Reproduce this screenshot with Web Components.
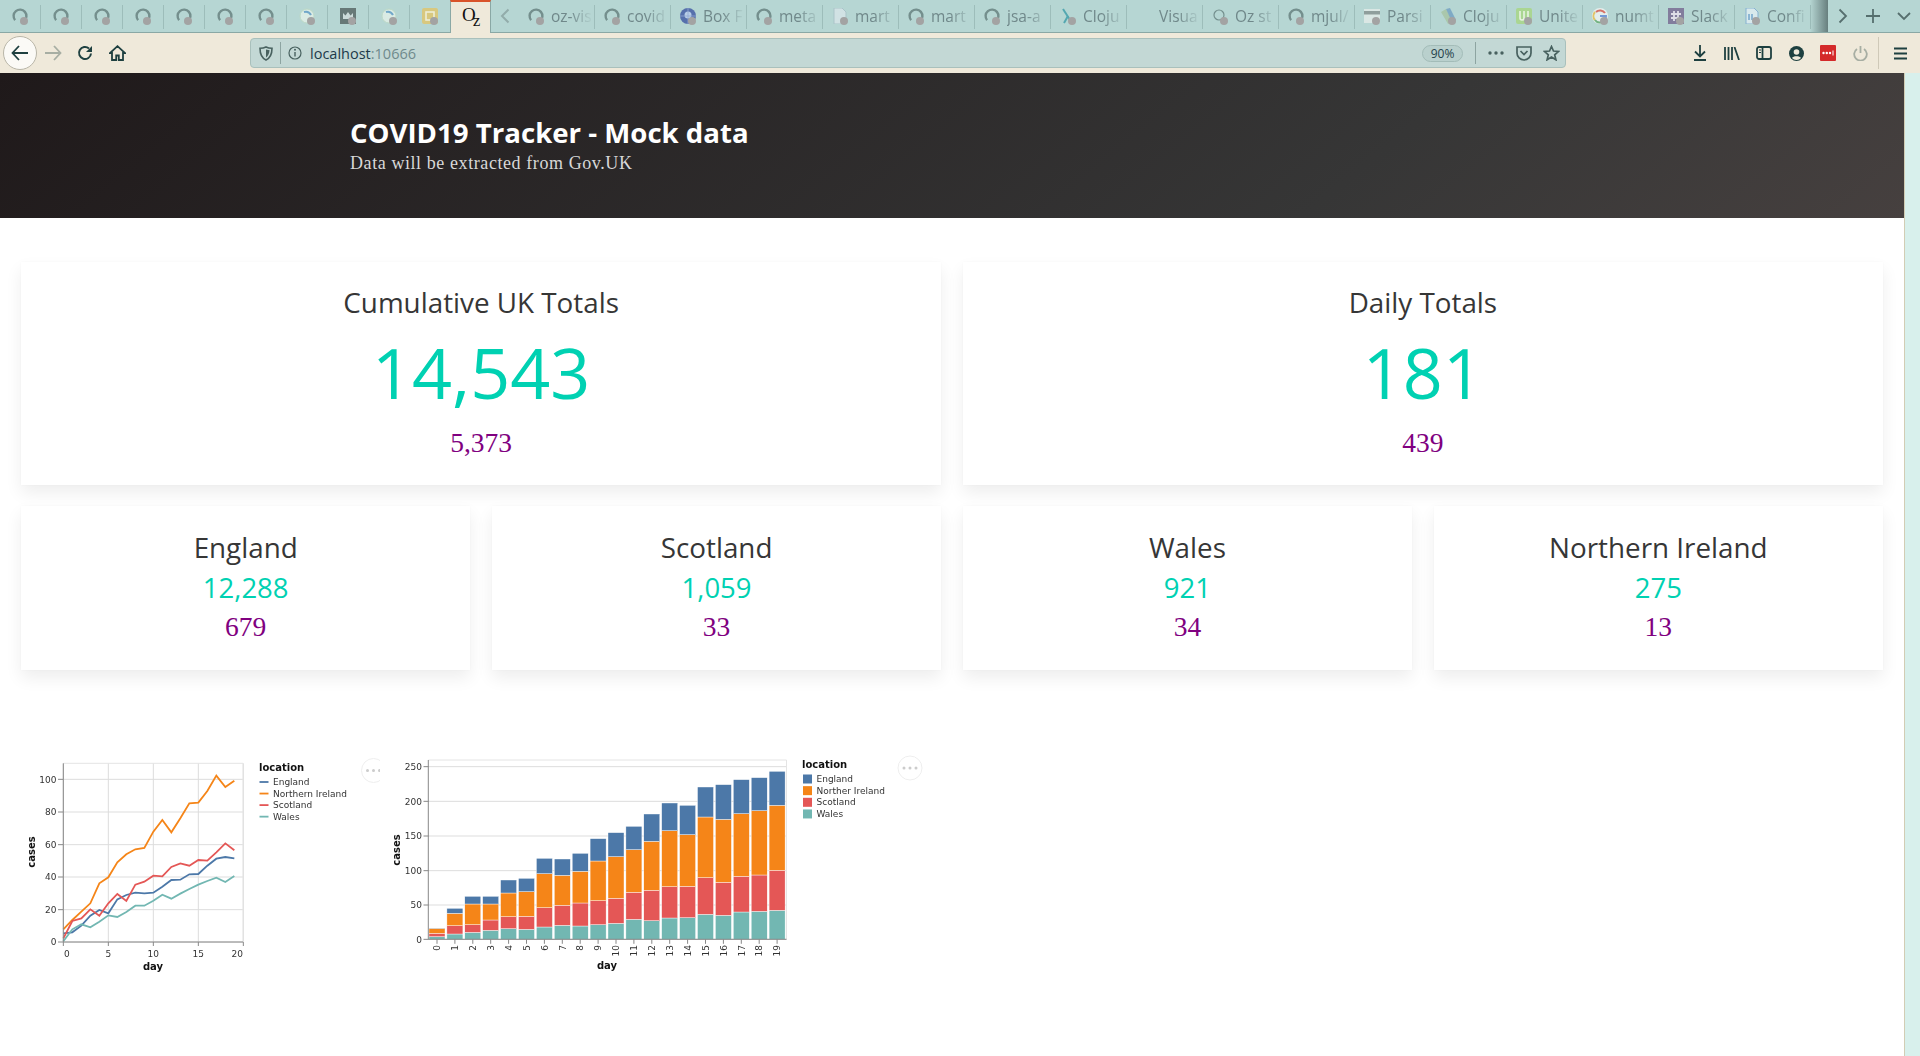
<!DOCTYPE html>
<html>
<head>
<meta charset="utf-8">
<title>COVID19 Tracker</title>
<style>
  html, body { margin: 0; height: 1056px; overflow: hidden; background: #fff; }
  body { display: flex; flex-direction: column; font-family: "Open Sans", sans-serif; }
  .below { display: flex; flex: 1; min-height: 0; }
  .page { width: 1904px; flex: none; }
</style>
</head>
<body>
<browser-tabs></browser-tabs>
<browser-toolbar></browser-toolbar>
<div class="below">
  <div class="page">
    <page-hero>
      <span slot="title">COVID19 Tracker - Mock data</span>
      <span slot="subtitle">Data will be extracted from Gov.UK</span>
    </page-hero>
    <stat-grid columns="2" style="margin-top:44px">
      <stat-card size="lg"><span slot="title">Cumulative UK Totals</span><span slot="value">14,543</span><span slot="sub">5,373</span></stat-card>
      <stat-card size="lg"><span slot="title">Daily Totals</span><span slot="value">181</span><span slot="sub">439</span></stat-card>
    </stat-grid>
    <stat-grid columns="4" style="margin-top:21px">
      <stat-card><span slot="title">England</span><span slot="value">12,288</span><span slot="sub">679</span></stat-card>
      <stat-card><span slot="title">Scotland</span><span slot="value">1,059</span><span slot="sub">33</span></stat-card>
      <stat-card><span slot="title">Wales</span><span slot="value">921</span><span slot="sub">34</span></stat-card>
      <stat-card><span slot="title">Northern Ireland</span><span slot="value">275</span><span slot="sub">13</span></stat-card>
    </stat-grid>
    <chart-row>
      <line-chart></line-chart>
      <bar-chart></bar-chart>
    </chart-row>
  </div>
  <page-scrollbar></page-scrollbar>
</div>

<script>
// favicons, all drawn on a 16x16 box
const FAVICONS = {
  github: '<circle cx="8" cy="8" r="6.4" fill="none" stroke="#6d8886" stroke-width="2.4" stroke-dasharray="33 7" transform="rotate(140 8 8)"/>',
  clj: '<circle cx="8" cy="8" r="7" fill="#dfeee6" stroke="#bcd8c4"/><path d="M5 4a6 6 0 0 1 7 3" fill="none" stroke="#6aa3c9" stroke-width="2"/>',
  crown: '<rect x="0" y="0" width="16" height="16" fill="#5f6f6e"/><path d="M3 11V5l2.500 2.500L8 4l2.500 3.500L13 5v6z" fill="#cfdcda"/>',
  yellow: '<rect x="0" y="0" width="16" height="16" rx="2" fill="#dcc777"/><rect x="4" y="4" width="8" height="8" fill="none" stroke="#f4f0d8" stroke-width="1.600"/>',
  box: '<circle cx="8" cy="8" r="8" fill="#4c65a8"/><circle cx="8" cy="7" r="3.500" fill="#b8cdea"/><path d="M8 0v16M0 8h16" stroke="#8fa5d4" stroke-width=".8"/>',
  doc: '<path d="M2 0h8l4 4v12H2z" fill="#d4e4e6" stroke="#a9c2c8"/>',
  clojure: '<path d="M3 1l9 14" stroke="#4aa3ad" stroke-width="2"/><path d="M8 8l-4 7" stroke="#4aa3ad" stroke-width="2"/>',
  oz: '<circle cx="7" cy="7" r="5" fill="none" stroke="#6d8886" stroke-width="1.200"/>',
  parse: '<rect x="0" y="1" width="16" height="14" fill="#dfe9e6"/><rect x="0" y="3" width="16" height="3.500" fill="#8b9997"/>',
  books: '<path d="M1 4l5-3 7 12-5 3z" fill="#a9c6a8"/><path d="M6 1l4-1 6 12-4 2z" fill="#7aa6c4"/>',
  unite: '<rect x="0" y="0" width="16" height="16" rx="2" fill="#a9d68c"/><path d="M4 3v7a2 2 0 0 0 4 0V3M8 3v7a2 2 0 0 0 4 0V3" fill="none" stroke="#eef7e4" stroke-width="1.600"/>',
  google: '<circle cx="8" cy="8" r="8" fill="#e9f1ef"/><path d="M13 5a6 6 0 0 0-9-1" fill="none" stroke="#d9685c" stroke-width="2"/><path d="M3 4a6 6 0 0 0 0 8" fill="none" stroke="#e6c35c" stroke-width="2"/><path d="M3 12a6 6 0 0 0 9 1" fill="none" stroke="#6cb07a" stroke-width="2"/><path d="M8 8h6a6 6 0 0 1-2 5" fill="none" stroke="#6d94d8" stroke-width="2"/>',
  slack: '<rect x="0" y="0" width="16" height="16" fill="#7d7498"/><path d="M6 3v10M10 3v10M3 6h10M3 10h10" stroke="#e4e0ea" stroke-width="1.800"/>',
  conf: '<path d="M2 0h8l4 4v12H2z" fill="#dcecef" stroke="#82aed0"/><path d="M5 6v6M8 6v6" stroke="#5b94c4" stroke-width="1.300"/>',
  none: ''
};

class BrowserTab extends HTMLElement {
  connectedCallback() {
    const icon = this.getAttribute('icon') || 'none';
    this.attachShadow({ mode: 'open' });
    this.shadowRoot.innerHTML = `
      <style>
        :host { display: flex; flex: none; align-items: center; box-sizing: border-box; height: 32px; position: relative; }
        :host([pinned]) { width: 41px; padding-left: 12px; }
        :host(:not([pinned])) { width: 76px; padding-left: 9px; }
        :host::after { content: ""; position: absolute; right: 0; top: 5px; bottom: 3px; width: 1px; background: #9dbdba; }
        .fav { position: relative; width: 16px; height: 16px; flex: none; }
        .fav svg { display: block; opacity: .9; }
        .dot { position: absolute; right: 0; bottom: -1px; width: 8px; height: 8px; border-radius: 50%; background: #a3a3a3; }
        .name { margin-left: 7px; width: 42px; white-space: nowrap; overflow: hidden; font-size: 15.500px; color: #70888a;
          -webkit-mask-image: linear-gradient(to right, #000 45%, transparent 100%); mask-image: linear-gradient(to right, #000 45%, transparent 100%); }
      </style>
      <div class="fav"><svg width="16" height="16" viewBox="0 0 16 16">${FAVICONS[icon]}</svg>${icon === 'none' ? '' : '<i class="dot"></i>'}</div>
      ${this.hasAttribute('pinned') ? '' : '<div class="name"><slot></slot></div>'}`;
  }
}
customElements.define('browser-tab', BrowserTab);

class BrowserTabs extends HTMLElement {
  connectedCallback() {
    const pinned = ['github','github','github','github','github','github','github','clj','crown','clj','yellow'];
    const open = [['github','oz-vis'],['github','covid'],['box','Box F'],['github','meta'],['doc','mart'],
      ['github','mart'],['github','jsa-a'],['clojure','Cloju'],['none','Visua'],['oz','Oz st'],
      ['github','mjul/'],['parse','Parsi'],['books','Cloju'],['unite','Unite'],['google','numt'],['slack','Slack'],['conf','Confi']];
    this.attachShadow({ mode: 'open' });
    this.shadowRoot.innerHTML = `
      <style>
        :host { display: flex; height: 33px; box-sizing: border-box; background: #b6d6d3; border-bottom: 1px solid #8aa8a5; flex: none; }
        .scroller { flex: 1; min-width: 0; display: flex; position: relative; overflow: hidden; height: 33px; }
        .active { flex: none; width: 41px; height: 33px; box-sizing: border-box; background: #efe9da; border-top: 2px solid #d9532a;
          border-right: 1px solid #8aa8a5; border-left: 1px solid #8aa8a5; margin-left: -1px; position: relative; z-index: 1; }
        .active svg { display: block; }
        .back { flex: none; width: 28px; height: 32px; display: flex; align-items: center; justify-content: center; box-sizing: border-box; }
        .fade { position: absolute; right: 0; top: 0; bottom: 1px; width: 18px; background: linear-gradient(to right, rgba(70,90,90,0), rgba(70,90,90,.7)); }
        .controls { flex: none; width: 92px; display: flex; align-items: center; }
        .controls span { display: flex; justify-content: center; }
      </style>
      <div class="scroller">
        ${pinned.map(i => `<browser-tab pinned icon="${i}"></browser-tab>`).join('')}
        <div class="active">
          <svg width="39" height="30" viewBox="0 0 39 30">
            <text x="11" y="19" font-family="Liberation Serif, serif" font-size="19" fill="#111">O<tspan dx="-3" dy="5" font-size="17">z</tspan></text>
          </svg>
        </div>
        <div class="back"><svg width="10" height="16" viewBox="0 0 10 16"><path d="M8.500 1.500L2 8l6.500 6.500" fill="none" stroke="#92acaa" stroke-width="2"/></svg></div>
        ${open.map(t => `<browser-tab icon="${t[0]}">${t[1]}</browser-tab>`).join('')}
        <div class="fade"></div>
      </div>
      <div class="controls">
        <span style="width:29px"><svg width="10" height="16" viewBox="0 0 10 16"><path d="M1.500 1.500L8 8l-6.500 6.500" fill="none" stroke="#566f6e" stroke-width="1.800"/></svg></span>
        <span style="width:31px"><svg width="16" height="16" viewBox="0 0 16 16"><path d="M8 1v14M1 8h14" stroke="#566f6e" stroke-width="1.800"/></svg></span>
        <span style="width:32px"><svg width="14" height="10" viewBox="0 0 14 10"><path d="M1 2l6 6 6-6" fill="none" stroke="#566f6e" stroke-width="1.800"/></svg></span>
      </div>`;
  }
}
customElements.define('browser-tabs', BrowserTabs);

class BrowserToolbar extends HTMLElement {
  connectedCallback() {
    const ic = '#1e4040';
    this.attachShadow({ mode: 'open' });
    this.shadowRoot.innerHTML = `
      <style>
        :host { display: flex; align-items: center; height: 40px; flex: none; background: #efe9da; box-sizing: border-box; padding-left: 3px; }
        .btn { width: 32px; height: 32px; flex: none; display: flex; align-items: center; justify-content: center; }
        .btn svg { display: block; }
        .back { width: 34px; height: 34px; border-radius: 50%; background: #fbfaf6; border: 1px solid #b9b6a8; box-sizing: border-box; }
        .url { flex: none; margin-left: 117px; width: 1316px; height: 30px; box-sizing: border-box; background: #c3d8d5; border: 1px solid #a9c0bc; border-radius: 4px;
          display: flex; align-items: center; font-size: 14.500px; color: #1d3a4a; }
        .sep { width: 1px; height: 22px; background: #8da4a1; flex: none; }
        .host { margin-left: 1px; flex: 1; }
        .port { color: #6f8a8c; }
        .pill { width: 41px; height: 17px; border-radius: 9px; border: 1px solid #a3bcb8; background: #b9d0cd; font-size: 12px; color: #24414a;
          display: flex; align-items: center; justify-content: center; flex: none; box-sizing: border-box; }
        .hr { width: 1px; height: 32px; background: #cfc9b8; margin-left: 3px; margin-right: 5px; flex: none; }
        .u { display: flex; justify-content: center; flex: none; }
      </style>
      <div class="btn back"><svg width="18" height="16" viewBox="0 0 18 16"><path d="M8 1L1.500 8 8 15M2 8h15" fill="none" stroke="${ic}" stroke-width="1.800"/></svg></div>
      <div class="btn"><svg width="18" height="16" viewBox="0 0 18 16"><path d="M10 1l6.500 7L10 15M16 8H1" fill="none" stroke="#a7aea3" stroke-width="1.800"/></svg></div>
      <div class="btn"><svg width="16" height="16" viewBox="0 0 16 16"><path d="M14 8.500A6 6 0 1 1 12 3.500" fill="none" stroke="${ic}" stroke-width="2"/><path d="M15 1v6H9z" fill="${ic}"/></svg></div>
      <div class="btn"><svg width="17" height="16" viewBox="0 0 17 16"><path d="M8.500 1.200L1 8h2v7h4.200v-4.500h2.600V15H14V8h2z" fill="none" stroke="${ic}" stroke-width="1.800"/></svg></div>
      <div class="url">
        <span class="u" style="width:29px"><svg width="14" height="15" viewBox="0 0 14 15"><path d="M7 1c2 1 4 1.300 6 1.300 0 5-1.500 9.700-6 11.700C2.500 12 1 7.300 1 2.300 3 2.300 5 2 7 1z" fill="none" stroke="#48615f" stroke-width="1.600"/><path d="M7 3.500v8c2-1.500 3.300-4 3.600-7.200z" fill="#48615f"/></svg></span>
        <i class="sep"></i>
        <span class="u" style="width:28px"><svg width="14" height="14" viewBox="0 0 14 14"><circle cx="7" cy="7" r="6" fill="none" stroke="#48615f" stroke-width="1.200"/><path d="M7 6v4.500" stroke="#48615f" stroke-width="1.400"/><circle cx="7" cy="3.800" r="1" fill="#48615f"/></svg></span>
        <span class="host">localhost<span class="port">:10666</span></span>
        <span class="pill">90%</span>
        <i class="sep" style="margin-left:12px"></i>
        <span class="u" style="width:40px"><svg width="16" height="4" viewBox="0 0 16 4"><circle cx="2" cy="2" r="1.700" fill="#48615f"/><circle cx="8" cy="2" r="1.700" fill="#48615f"/><circle cx="14" cy="2" r="1.700" fill="#48615f"/></svg></span>
        <span class="u" style="width:16px"><svg width="16" height="15" viewBox="0 0 16 15"><path d="M1 1h14v6a7 7 0 0 1-14 0z" fill="none" stroke="#48615f" stroke-width="1.700"/><path d="M4.500 5L8 8.500 11.500 5" fill="none" stroke="#48615f" stroke-width="1.700"/></svg></span>
        <span class="u" style="width:28px;margin-left:5px"><svg width="17" height="16" viewBox="0 0 17 16"><path d="M8.500 1.500l2 4.500 5 .5-3.800 3.300 1.200 5-4.400-2.700-4.400 2.700 1.200-5L1.500 6.500l5-.5z" fill="none" stroke="#48615f" stroke-width="1.700"/></svg></span>
      </div>
      <div class="btn" style="margin-left:118px"><svg width="14" height="16" viewBox="0 0 14 16"><path d="M7 0v11M2 6.500L7 11.500l5-5M1 15h12" fill="none" stroke="${ic}" stroke-width="1.800"/></svg></div>
      <div class="btn"><svg width="16" height="13" viewBox="0 0 16 13"><path d="M1 0v13M4.500 0v13M8 0v13M10.500 0l4.500 13" stroke="${ic}" stroke-width="1.800"/></svg></div>
      <div class="btn"><svg width="16" height="14" viewBox="0 0 16 14"><rect x="1" y="1" width="14" height="12" rx="2" fill="none" stroke="${ic}" stroke-width="1.800"/><path d="M6.500 1v12" stroke="${ic}" stroke-width="1.800"/><path d="M3 4h2M3 6.500h2" stroke="${ic}" stroke-width="1"/></svg></div>
      <div class="btn"><svg width="15" height="15" viewBox="0 0 15 15"><circle cx="7.500" cy="7.500" r="7.500" fill="${ic}"/><circle cx="7.500" cy="6" r="2.800" fill="#efe9da"/><path d="M3 12c1-2.500 8-2.500 9 0a6 6 0 0 1-9 0z" fill="#efe9da"/></svg></div>
      <div class="btn"><svg width="16" height="16" viewBox="0 0 16 16"><rect width="16" height="16" rx="1" fill="#d42a2a"/><circle cx="3.500" cy="8" r="1.200" fill="#fff"/><circle cx="6.800" cy="8" r="1.200" fill="#fff"/><circle cx="10" cy="8" r="1.200" fill="#fff"/><path d="M13 5.500v5" stroke="#fff" stroke-width="1"/></svg></div>
      <div class="btn"><svg width="15" height="15" viewBox="0 0 15 15"><path d="M4 3a6.300 6.300 0 1 0 7 0M7.500 0v7" fill="none" stroke="#a7aea3" stroke-width="1.800"/></svg></div>
      <i class="hr" style="margin-left:2px"></i>
      <div class="btn"><svg width="13" height="13" viewBox="0 0 13 13"><path d="M0 1.500h13M0 6.500h13M0 11.500h13" stroke="${ic}" stroke-width="2"/></svg></div>`;
  }
}
customElements.define('browser-toolbar', BrowserToolbar);

class PageHero extends HTMLElement {
  connectedCallback() {
    this.attachShadow({ mode: 'open' });
    this.shadowRoot.innerHTML = `
      <style>
        :host { display: block; height: 145px; box-sizing: border-box; padding: 42px 0 0 350px; color: #fff;
          background: linear-gradient(141deg, #1f191a 0%, #363636 71%, #46403f 100%); }
        .t { font: 700 27.600px/35px "Open Sans", sans-serif; }
        .s { font: 18px/26px "Liberation Serif", serif; color: #d8d8d8; letter-spacing: .58px; }
      </style>
      <div class="t"><slot name="title"></slot></div>
      <div class="s"><slot name="subtitle"></slot></div>`;
  }
}
customElements.define('page-hero', PageHero);

class StatGrid extends HTMLElement {
  connectedCallback() {
    const n = this.getAttribute('columns') || 2;
    this.attachShadow({ mode: 'open' });
    this.shadowRoot.innerHTML = `
      <style>
        :host { display: grid; grid-template-columns: repeat(${n}, 1fr); column-gap: 21.500px; padding: 0 21px; }
      </style>
      <slot></slot>`;
  }
}
customElements.define('stat-grid', StatGrid);

class StatCard extends HTMLElement {
  connectedCallback() {
    this.attachShadow({ mode: 'open' });
    this.shadowRoot.innerHTML = `
      <style>
        :host { display: block; background: #fff; text-align: center; box-sizing: border-box; height: 164px; padding-top: 21px;
          box-shadow: 0 8px 16px rgba(10,10,10,.07), 0 0 2px rgba(10,10,10,.03); }
        .t { font: 27.800px/40px "Open Sans", sans-serif; color: #363636; }
        .v { font: 27.500px/42px "Open Sans", sans-serif; color: #00d1b2; }
        .s { font: 27.500px/36px "Liberation Serif", serif; color: #800080; }
        :host([size=lg]) { height: 223px; padding-top: 20px; }
        :host([size=lg]) .v { font-size: 70px; line-height: 100px; }
        :host([size=lg]) .s { line-height: 41px; }
      </style>
      <div class="t"><slot name="title"></slot></div>
      <div class="v"><slot name="value"></slot></div>
      <div class="s"><slot name="sub"></slot></div>`;
  }
}
customElements.define('stat-card', StatCard);

class ChartRow extends HTMLElement {
  connectedCallback() {
    this.attachShadow({ mode: 'open' });
    this.shadowRoot.innerHTML = `
      <style>:host { display: flex; margin-top: 70px; height: 240px; }</style>
      <slot></slot>`;
  }
}
customElements.define('chart-row', ChartRow);

const COLORS = { England: '#4c78a8', NI: '#f58518', Scotland: '#e45756', Wales: '#72b7b2' };
const CHART_STYLE = `
  :host { display: block; flex: none; }
  svg { display: block; filter: blur(.3px); font-family: "DejaVu Sans", sans-serif; font-size: 9px; fill: #333; }
  .b { font-weight: 700; font-size: 10px; fill: #111; }`;

function menuDots(cx, cy) {
  return `<circle cx="${cx}" cy="${cy}" r="12" fill="#fff" stroke="#eee"/>` +
    [-6, 0, 6].map(d => `<circle cx="${cx + d}" cy="${cy}" r="1.500" fill="#ccc"/>`).join('');
}

class LineChart extends HTMLElement {
  connectedCallback() {
    // traced values, in px*3 of the plot
    const series = {
      England: [580,577,557,527,510,520,478,465,458,460,458,440,420,419,403,402,377,356,351,355],
      NI: [568,540,515,490,430,412,367,343,328,324,275,240,277,235,190,188,153,107,141,122],
      Scotland: [595,543,535,508,527,490,462,483,434,425,407,409,381,370,377,360,362,337,310,331],
      Wales: [604,568,553,562,545,526,531,516,497,497,482,464,476,461,447,434,423,413,426,408]
    };
    const X = d => (190 + d * 27) / 3;
    const lines = Object.keys(series).map(k =>
      `<polyline fill="none" stroke="${COLORS[k]}" stroke-width="1.800" points="${series[k].map((y, d) => X(d) + ',' + y / 3).join(' ')}"/>`).join('');
    const yT = [[0,606],[20,509],[40,411],[60,314],[80,216],[100,118]];
    const xT = [0,5,10,15,20];
    const grid = yT.map(t => `<path d="M63.300 ${t[1] / 3}H243" stroke="#ddd"/>`).join('') +
      xT.map(t => `<path d="M${X(t)} 23.300V202" stroke="#ddd"/>`).join('') +
      '<path d="M63.300 23.300H243V202" fill="none" stroke="#e4e4e4"/>';
    const axis = '<path d="M63.300 23.300V202H243" fill="none" stroke="#888"/>' +
      yT.map(t => `<path d="M58 ${t[1] / 3}h5" stroke="#888"/><text x="56.500" y="${t[1] / 3 + 3.200}" text-anchor="end">${t[0]}</text>`).join('') +
      xT.map(t => `<path d="M${X(t)} 202v4" stroke="#888"/><text x="${t === 0 ? 64 : t === 20 ? 243 : X(t)}" y="216.500" text-anchor="${t === 0 ? 'start' : t === 20 ? 'end' : 'middle'}">${t}</text>`).join('');
    const legend = [['England','England'],['NI','Northern Ireland'],['Scotland','Scotland'],['Wales','Wales']].map((l, i) => {
      const y = 42 + i * 11.550;
      return `<path d="M259.500 ${y}h9" stroke="${COLORS[l[0]]}" stroke-width="1.800"/><text x="273" y="${y + 3}">${l[1]}</text>`;
    }).join('');
    this.attachShadow({ mode: 'open' });
    this.shadowRoot.innerHTML = `
      <style>${CHART_STYLE}</style>
      <svg width="380" height="240" viewBox="0 0 380 240">
        ${grid}${lines}${axis}
        <text class="b" x="153" y="230" text-anchor="middle">day</text>
        <text class="b" transform="translate(35,112) rotate(-90)" text-anchor="middle">cases</text>
        <text class="b" x="259" y="31">location</text>
        ${legend}
        ${menuDots(373.500, 30.500)}
      </svg>`;
  }
}
customElements.define('line-chart', LineChart);

class BarChart extends HTMLElement {
  connectedCallback() {
    // stack tops per day, bottom to top: Wales, Scotland, NI, England (px*3)
    const tops = [[590,580,565,564],[582,557,520,505],[577,554,492,469],[571,540,492,469],[566,530,459,420],
      [568,529,455,415],[561,503,401,355],[556,496,406,357],[558,489,394,340],[554,482,363,296],
      [550,475,350,278],[538,457,329,259],[542,451,304,222],[534,440,272,189],[533,439,284,196],
      [523,413,231,141],[526,427,238,134],[516,409,221,119],[514,405,212,113],[511,391,196,94]];
    const fills = [COLORS.Wales, COLORS.Scotland, COLORS.NI, COLORS.England];
    const bars = tops.map((t, d) => {
      const x = (147 + d * 53.700) / 3;
      return t.map((y, i) => {
        const bottom = i ? t[i - 1] : 598;
        return `<rect x="${x}" y="${y / 3}" width="16" height="${(bottom - y) / 3}" fill="${fills[i]}" stroke="#fff" stroke-width=".4"/>`;
      }).join('');
    }).join('');
    const yT = [[0,598],[50,495],[100,392],[150,288],[200,184],[250,80]];
    const grid = yT.map(t => `<path d="M48.300 ${t[1] / 3}H406.500" stroke="#ddd"/>`).join('') +
      '<path d="M48.300 20H406.500V199.300" fill="none" stroke="#e4e4e4"/>';
    const axis = '<path d="M48.300 20V199.300H406.500" fill="none" stroke="#888"/>' +
      yT.map(t => `<path d="M43.500 ${t[1] / 3}h5" stroke="#888"/><text x="42" y="${t[1] / 3 + 3.200}" text-anchor="end">${t[0]}</text>`).join('') +
      tops.map((t, d) => {
        const x = (171 + d * 53.700) / 3;
        return `<path d="M${x} 199.300v4.500" stroke="#888"/><text transform="translate(${x + 3.200},205) rotate(-90)" text-anchor="end">${d}</text>`;
      }).join('');
    const legend = [['England','England'],['NI','Norther Ireland'],['Scotland','Scotland'],['Wales','Wales']].map((l, i) => {
      const y = 34.500 + i * 11.650;
      return `<rect x="423" y="${y}" width="9" height="9" fill="${COLORS[l[0]]}"/><text x="436.500" y="${y + 7.500}">${l[1]}</text>`;
    }).join('');
    this.attachShadow({ mode: 'open' });
    this.shadowRoot.innerHTML = `
      <style>${CHART_STYLE}</style>
      <svg width="560" height="240" viewBox="0 0 560 240">
        ${grid}${bars}${axis}
        <text class="b" x="227" y="229" text-anchor="middle">day</text>
        <text class="b" transform="translate(20,110) rotate(-90)" text-anchor="middle">cases</text>
        <text class="b" x="422" y="28">location</text>
        ${legend}
        ${menuDots(530, 28)}
      </svg>`;
  }
}
customElements.define('bar-chart', BarChart);

class PageScrollbar extends HTMLElement {
  connectedCallback() {
    this.attachShadow({ mode: 'open' });
    this.shadowRoot.innerHTML = `<style>:host { display: block; width: 16px; flex: none; box-sizing: border-box; background: #d8f0ec; border-left: 1px solid #d2cdb4; }</style>`;
  }
}
customElements.define('page-scrollbar', PageScrollbar);
</script>
</body>
</html>
